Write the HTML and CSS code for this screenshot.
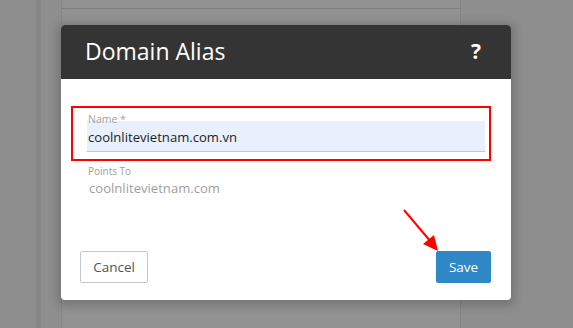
FILE: index.html
```html
<!DOCTYPE html>
<html>
<head>
<meta charset="utf-8">
<link rel="stylesheet" href="styles.css">
</head>
<body>
<div class="page">
  <div class="rail"></div>
  <div class="panel">
    <div class="panel-top"></div>
  </div>
</div>

<div class="modal">
  <div class="modal-header">
    <span class="modal-title">Domain Alias</span>
    <span class="help">?</span>
  </div>
  <div class="modal-body">
    <div class="field">
      <label class="float-label">Name *</label>
      <div class="input">coolnlitevietnam.com.vn</div>
    </div>
    <div class="static-field">
      <div class="static-label">Points To</div>
      <div class="static-value">coolnlitevietnam.com</div>
    </div>
    <div class="footer">
      <button class="btn btn-cancel">Cancel</button>
      <button class="btn btn-save">Save</button>
    </div>
  </div>
  <div class="highlight"></div>
  <svg class="arrow" width="60" height="60" viewBox="0 0 60 60">
    <line x1="3" y1="3" x2="30" y2="35" stroke="#f00" stroke-width="2"/>
    <polygon points="37,44 22,37 33,28" fill="#f00"/>
  </svg>
</div>
</body>
</html>
```
FILE: styles.css
```css
html, body {
  margin: 0;
  padding: 0;
}
body {
  width: 573px;
  height: 328px;
  overflow: hidden;
  background: #8e8e8e;
  font-family: "Open Sans", "Noto Sans", sans-serif;
  position: relative;
}
.page {
  display: flex;
  height: 328px;
}
.rail {
  width: 5px;
  margin-left: 36px;
  background: #868686;
}
.panel {
  margin-left: 20px;
  width: 398px;
  background: #929292;
  border-left: 1px solid #868686;
  border-right: 1px solid #848484;
}
.panel-top {
  height: 8px;
  border-bottom: 1px solid #7f7f7f;
}
.modal {
  position: absolute;
  left: 61px;
  top: 25px;
  width: 450px;
  height: 275px;
  background: #fff;
  border-radius: 4px;
  box-shadow: 0 2px 10px 4px rgba(0, 0, 0, 0.18);
  display: flex;
  flex-direction: column;
}
.modal-header {
  height: 54px;
  background: #343434;
  border-radius: 4px 4px 0 0;
  display: flex;
  align-items: center;
  justify-content: space-between;
  padding: 0 30px 0 24px;
  color: #fff;
}
.modal-title {
  font-size: 23px;
  line-height: 1;
  margin-top: -1px;
}
.help {
  font-size: 21px;
  font-weight: 700;
  margin-top: -3px;
}
.modal-body {
  flex: 1;
  display: flex;
  flex-direction: column;
  padding: 42px 26px 17px 26px;
}
.field {
  position: relative;
}
.float-label {
  position: absolute;
  left: 1px;
  top: -8px;
  font-size: 10.5px;
  line-height: 12px;
  color: #a3a3a3;
}
.input {
  height: 30px;
  background: #e8f0fd;
  border-bottom: 1px solid #c3c8d0;
  font-size: 13.1px;
  line-height: 33px;
  color: #222;
  padding-left: 1px;
}
.static-field {
  margin-top: 12px;
}
.static-label {
  font-size: 10px;
  line-height: 14px;
  color: #a0a0a0;
  padding-left: 1px;
}
.static-value {
  font-size: 13.1px;
  line-height: 20px;
  color: #9e9e9e;
  padding-left: 2px;
}
.footer {
  margin-top: auto;
  display: flex;
  justify-content: space-between;
  margin-left: -7px;
  margin-right: -6px;
}
.btn {
  font-family: "Open Sans", "Noto Sans", sans-serif;
  font-size: 13.5px;
  height: 32px;
  border-radius: 2px;
  padding: 0;
  cursor: pointer;
}
.btn-cancel {
  width: 68px;
  background: #fff;
  border: 1px solid #c6c6c6;
  color: #555;
}
.btn-save {
  width: 55px;
  background: #2f87c5;
  border: 1px solid #2f87c5;
  color: #fff;
  font-weight: 500;
}
.highlight {
  position: absolute;
  left: 10px;
  top: 81px;
  width: 416px;
  height: 51px;
  border: 2px solid #f00;
}
.arrow {
  position: absolute;
  left: 340px;
  top: 182px;
  overflow: visible;
}
```
